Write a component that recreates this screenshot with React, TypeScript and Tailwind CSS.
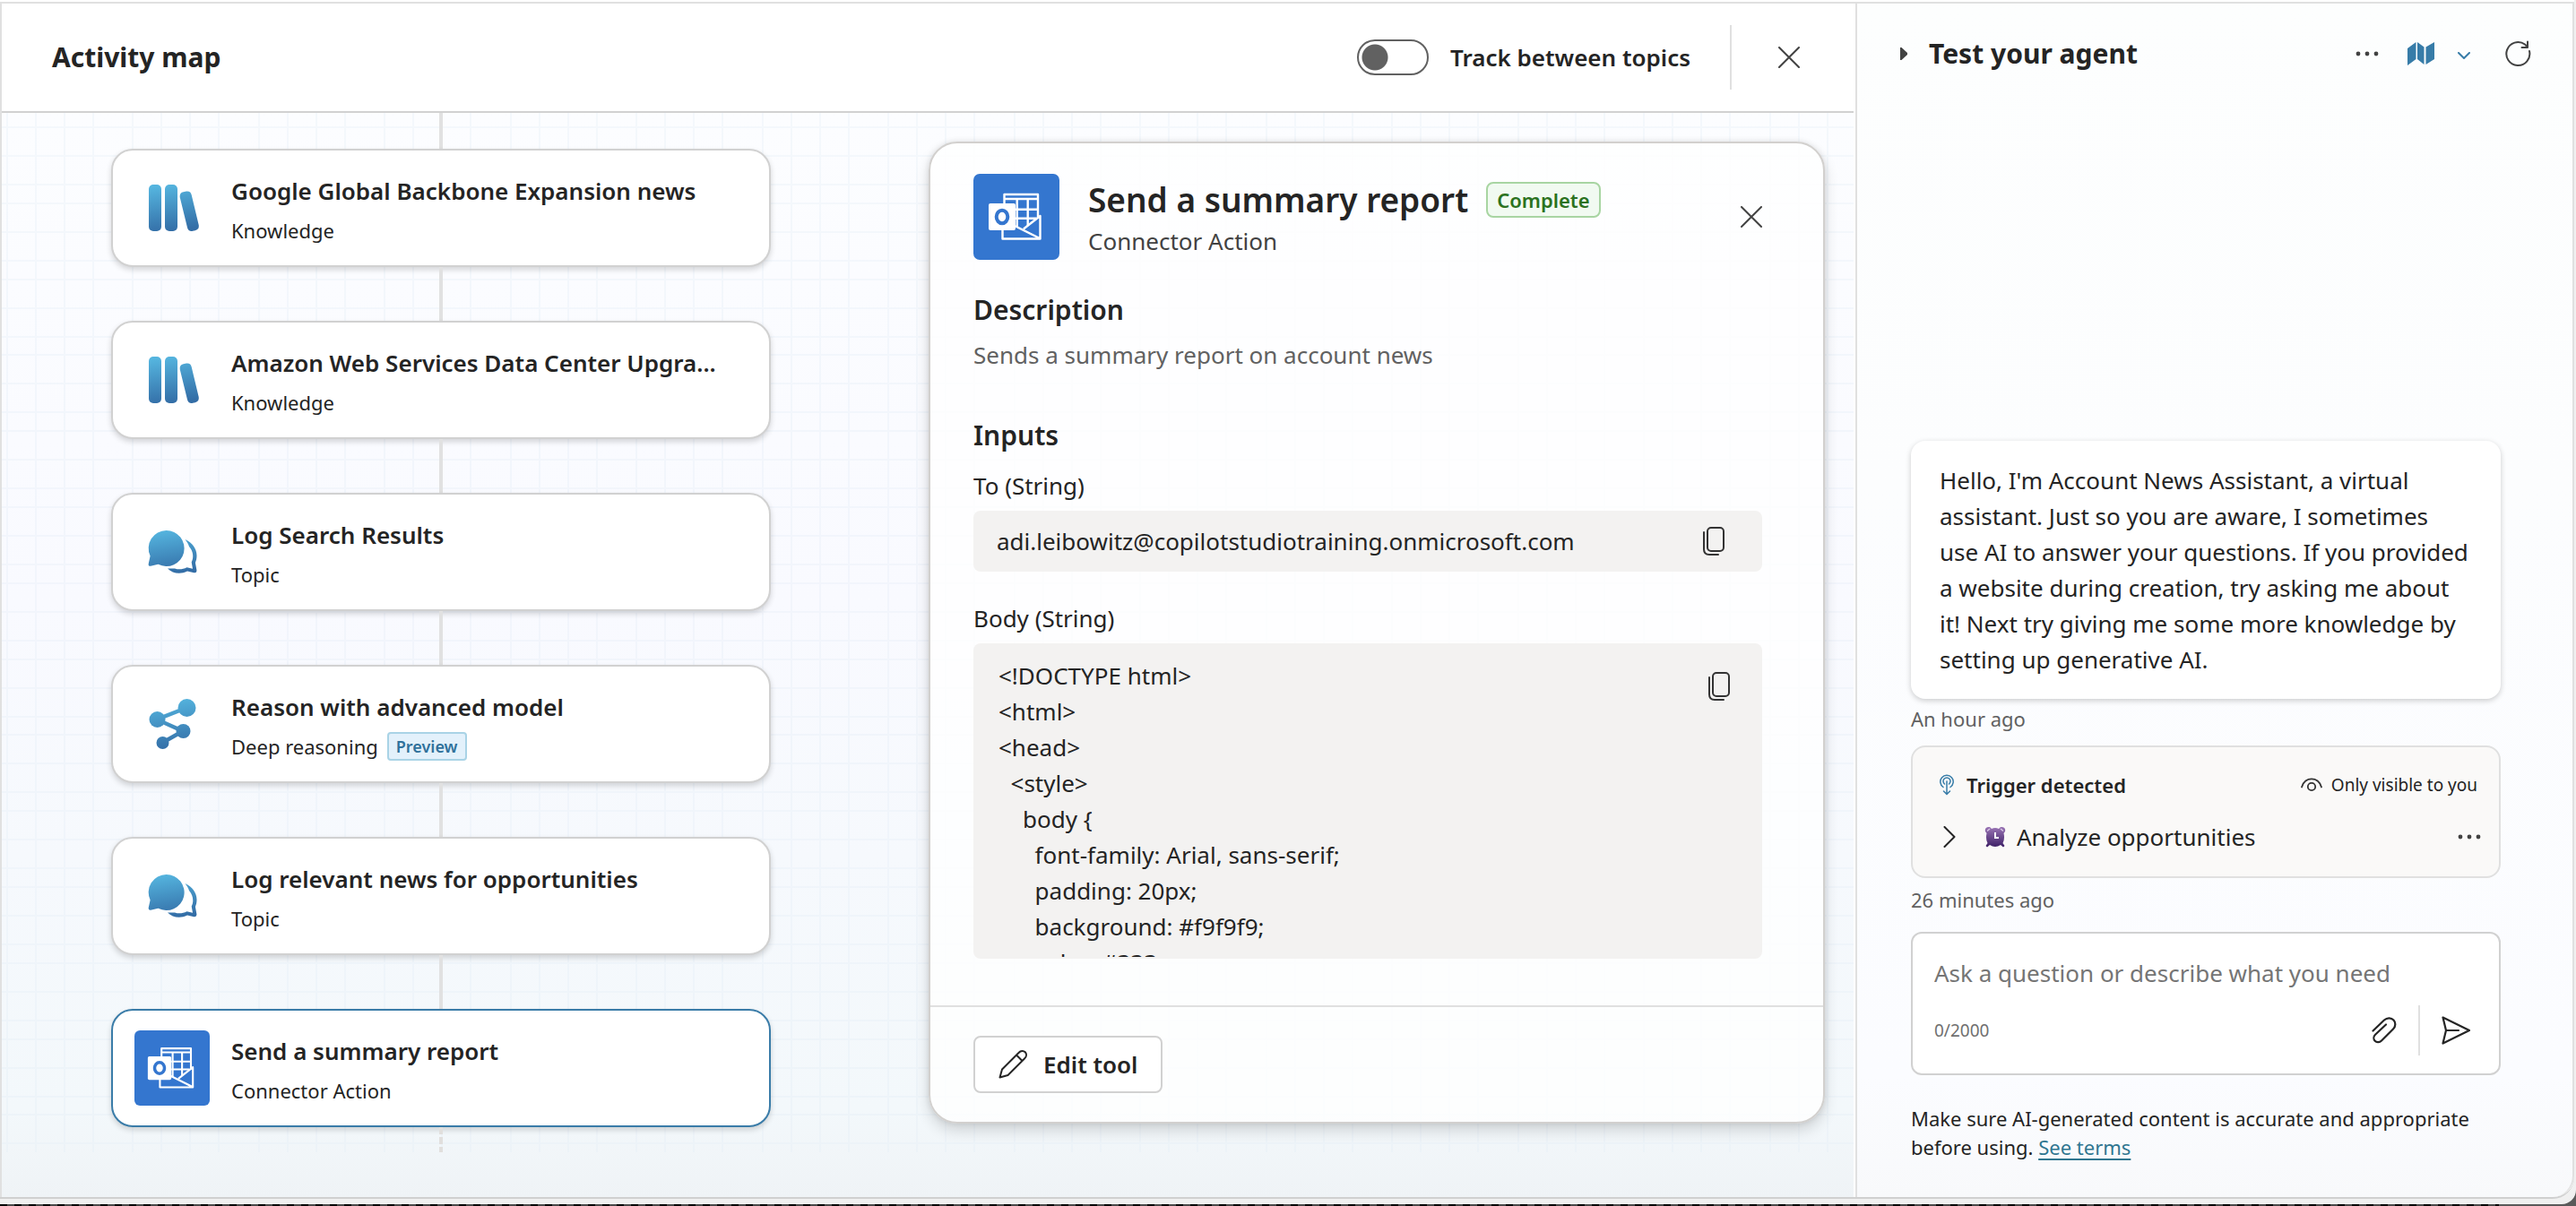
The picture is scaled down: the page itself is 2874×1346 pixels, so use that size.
import type { ReactNode } from "react";

const BLUE_TOP = "#55b5df";
const BLUE_BOTTOM = "#336da6";

function Fade({ id, y1, y2 }: { id: string; y1: number; y2: number }) {
  return (
    <defs>
      <linearGradient id={id} gradientUnits="userSpaceOnUse" x1="36" y1={y1} x2="44" y2={y2}>
        <stop offset="0" stopColor={BLUE_TOP} />
        <stop offset="1" stopColor={BLUE_BOTTOM} />
      </linearGradient>
    </defs>
  );
}

function BooksIcon() {
  return (
    <svg viewBox="0 0 84 84" className="size-21 shrink-0" aria-hidden="true">
      <Fade id="books" y1={16} y2={68} />
      <g fill="url(#books)">
        <rect x="16" y="16" width="14" height="52" rx="5" />
        <rect x="34" y="16" width="14" height="52" rx="5" />
        <path d="M54.6 24.2 L58 23.6 Q62.8 23 63.8 28 L71.7 61 Q72.6 66 67.8 67.2 L65.2 67.8 Q60.2 68.8 59 64 L50.8 30.4 Q50 25.2 54.6 24.2 Z" />
      </g>
    </svg>
  );
}

function ChatIcon() {
  return (
    <svg viewBox="0 0 84 84" className="size-21 shrink-0" aria-hidden="true">
      <Fade id="chat" y1={17} y2={66} />
      <path
        fill="url(#chat)"
        d="M35.500 18 A20 20 0 1 1 26.500 55.800 L18 57.800 Q15.300 58 15.700 55.200 L17.600 46.500 A20 20 0 0 1 35.500 18 Z"
      />
      <path
        fill="url(#chat)"
        d="M56.500 28 C64.500 31.500 69.500 38.500 69.500 46 C69.500 49 69 51.500 67.900 54 L69.400 62.300 Q69.700 65.600 66.500 65.200 L59 63.500 C51 67.500 42.500 66 37 60.500 C43 60.500 44 60.300 45 60.500 C49.500 62 54 61.500 58.500 59.300 L65 60.700 L63.700 53.500 C66.500 48 65.500 41 61 36 C60 33 58.500 30.500 56.500 28 Z"
      />
    </svg>
  );
}

function ReasonIcon() {
  return (
    <svg viewBox="0 0 84 84" className="size-21 shrink-0" aria-hidden="true">
      <Fade id="reason" y1={14} y2={70} />
      <path d="M58 24 L25 37 L54 50 L31 63" fill="none" stroke="url(#reason)" strokeWidth="4.500" />
      <g fill="url(#reason)">
        <circle cx="58.500" cy="24" r="10" />
        <circle cx="25.500" cy="37" r="9" />
        <circle cx="54.500" cy="50" r="8" />
        <circle cx="31.500" cy="63" r="7" />
      </g>
    </svg>
  );
}

function OutlookIcon({ className }: { className: string }) {
  return (
    <svg viewBox="0 0 96 96" className={className} aria-hidden="true">
      <rect width="96" height="96" rx="7" fill="#3476cf" />
      <g fill="none" stroke="#fff" strokeWidth="2.400" strokeLinejoin="round">
        <path d="M34.500 34 V23 H72 V50" />
        <path d="M34.500 28 H72 M48.700 28 V60 M60.700 28 V58 M47 39.700 H72 M47 49.700 H70" />
        <path d="M32.500 62 V72.500 H74.500 V47 L56 61.500 M46 58 L74 72" />
      </g>
      <rect x="17" y="33" width="30" height="30" rx="2" fill="#fff" />
      <ellipse cx="32" cy="48" rx="6.300" ry="7.200" fill="none" stroke="#3476cf" strokeWidth="4" />
    </svg>
  );
}

function CloseIcon() {
  return (
    <svg viewBox="0 0 24 24" className="size-6" fill="none" stroke="#424242" strokeWidth="2" strokeLinecap="round" aria-hidden="true">
      <path d="M1 1 L23 23 M23 1 L1 23" />
    </svg>
  );
}

function CopyIcon() {
  return (
    <svg viewBox="0 0 24 32" className="h-8 w-6" fill="none" stroke="#333" strokeWidth="2" strokeLinecap="round" aria-hidden="true">
      <rect x="5" y="1" width="18" height="26" rx="4" />
      <path d="M1 6 V25 Q1 31 7 31 H17" />
    </svg>
  );
}

function Dots() {
  return (
    <svg viewBox="0 0 26 6" className="h-1.5 w-6.5" fill="#424242" aria-hidden="true">
      <circle cx="3" cy="3" r="2.400" />
      <circle cx="13" cy="3" r="2.400" />
      <circle cx="23" cy="3" r="2.400" />
    </svg>
  );
}

function GridPattern() {
  return (
    <svg className="absolute inset-0 h-full w-full" aria-hidden="true">
      <defs>
        <pattern id="grid" x="5" y="15" width="281" height="424" patternUnits="userSpaceOnUse">
          <path
            d="M1 0V424M33 0V424M65 0V424M97 0V424M141 0V424M173 0V424M205 0V424M237 0V424M0 1H281M0 33H281M0 65H281M0 86H281M0 118H281M0 150H281M0 171H281M0 203H281M0 235H281M0 255H281M0 287H281M0 319H281M0 340H281M0 372H281M0 404H281"
            stroke="#dfe9f2"
            strokeOpacity="0.28"
            strokeWidth="2"
            fill="none"
          />
        </pattern>
      </defs>
      <rect width="100%" height="100%" fill="url(#grid)" />
    </svg>
  );
}

type Step = { title: string; kind: string; icon: ReactNode; preview?: boolean; selected?: boolean };

const steps: Step[] = [
  { title: "Google Global Backbone Expansion news", kind: "Knowledge", icon: <BooksIcon /> },
  { title: "Amazon Web Services Data Center Upgra...", kind: "Knowledge", icon: <BooksIcon /> },
  { title: "Log Search Results", kind: "Topic", icon: <ChatIcon /> },
  { title: "Reason with advanced model", kind: "Deep reasoning", icon: <ReasonIcon />, preview: true },
  { title: "Log relevant news for opportunities", kind: "Topic", icon: <ChatIcon /> },
  { title: "Send a summary report", kind: "Connector Action", icon: <OutlookIcon className="size-21 shrink-0" />, selected: true },
];

function StepCard({ step }: { step: Step }) {
  return (
    <button
      type="button"
      className={
        step.selected
          ? "flex h-33 w-full items-center gap-6 rounded-3xl border-2 border-[#3a7ca8] bg-white px-6 text-left shadow-[0_3px_6px_rgba(0,0,0,0.16)]"
          : "flex h-33 w-full items-center gap-6 rounded-3xl border-2 border-[#d1d1d1] bg-white px-6 text-left shadow-[0_3px_6px_rgba(0,0,0,0.16)]"
      }
    >
      {step.icon}
      <span className="flex min-w-0 flex-col gap-1.5">
        <span className="truncate text-[26px] leading-11 font-semibold">{step.title}</span>
        <span className="flex items-center gap-2.5 text-[22px] leading-8">
          {step.kind}
          {step.preview && (
            <span className="rounded-sm border-2 border-[#a9d3e6] bg-[#e3f1fb] px-2 text-lg leading-7 font-semibold text-[#30719b]">
              Preview
            </span>
          )}
        </span>
      </span>
    </button>
  );
}

const bodyText = `<!DOCTYPE html>
<html>
<head>
  <style>
    body {
      font-family: Arial, sans-serif;
      padding: 20px;
      background: #f9f9f9;
      color: #333;`;

function DetailPanel() {
  return (
    <article className="relative mt-8 mr-8 ml-44 min-w-0 flex-1 self-start rounded-[32px] border-2 border-[#d2d0ce] bg-white/80 shadow-[0_8px_16px_rgba(0,0,0,0.14),0_0_6px_rgba(0,0,0,0.1)]">
      <div className="pt-8.5 pr-17 pb-13 pl-12">
        <header className="flex items-center gap-8">
          <OutlookIcon className="size-24 shrink-0" />
          <div className="flex flex-1 flex-col gap-1.5">
            <div className="flex items-center gap-5">
              <h2 className="text-[37px] leading-12 font-semibold">Send a summary report</h2>
              <span className="rounded-lg border-2 border-[#a8d5a2] bg-[#f1faf1] px-2.5 text-[22px] leading-9 font-semibold text-[#2b7220]">
                Complete
              </span>
            </div>
            <p className="text-[26px] leading-8 text-[#424242]">Connector Action</p>
          </div>
          <button type="button" aria-label="Close details">
            <CloseIcon />
          </button>
        </header>
        <h3 className="mt-9 text-[30px] leading-10 font-semibold">Description</h3>
        <p className="mt-2.5 text-[26px] leading-10 text-[#616161]">Sends a summary report on account news</p>
        <h3 className="mt-12.5 text-[30px] leading-10 font-semibold">Inputs</h3>
        <p className="mt-4 text-[26px] leading-10">To (String)</p>
        <div className="mt-2 flex h-17 items-center justify-between rounded-lg bg-[#f3f2f1] pr-10.5 pl-6.5 text-[26px]">
          <span>adi.leibowitz@copilotstudiotraining.onmicrosoft.com</span>
          <button type="button" aria-label="Copy To value">
            <CopyIcon />
          </button>
        </div>
        <p className="mt-8 text-[26px] leading-10">Body (String)</p>
        <div className="mt-2 flex h-88 items-start justify-between rounded-lg bg-[#f3f2f1] pt-4 pr-9 pb-0.5 pl-7">
          <pre className="h-full overflow-hidden font-[inherit] text-[26px] leading-10">{bodyText}</pre>
          <button type="button" aria-label="Copy Body value" className="mt-4">
            <CopyIcon />
          </button>
        </div>
      </div>
      <footer className="border-t-2 border-[#e0e0e0] px-12 py-8">
        <button type="button" className="flex h-16 items-center gap-4.5 rounded-lg border-2 border-[#d1d1d1] bg-white px-6.5 text-[26px] font-semibold">
          <svg viewBox="0 0 32 32" className="size-8" fill="none" stroke="#242424" strokeWidth="2" strokeLinejoin="round" aria-hidden="true">
            <path d="M22.500 3 C25 .2 28.200 .8 29.800 2.300 C31.400 4 31.600 7 29 9.500 L10.500 28 L1.500 30.500 L4 21.500 Z M20 5.500 L26.500 12" />
          </svg>
          Edit tool
        </button>
      </footer>
    </article>
  );
}

function ActivityMap() {
  return (
    <section className="flex min-w-0 flex-1 flex-col border-l-2 border-[#e0e0e0] pr-0.5">
      <header className="box-content flex h-30 items-center border-b-2 border-[#d1d1d1] bg-white">
        <h1 className="flex-1 pl-14 text-3xl leading-10 font-bold">Activity map</h1>
        <label className="flex items-center gap-6 text-[26px] font-semibold">
          <input
            type="checkbox"
            role="switch"
            className="h-10 w-20 appearance-none rounded-full border-2 border-[#616161] bg-[radial-gradient(circle_at_18px_18px,#616161_14px,transparent_15px)]"
          />
          Track between topics
        </label>
        <span className="mr-13 ml-11 h-18 w-0.5 bg-[#e0e0e0]" />
        <button type="button" aria-label="Close activity map" className="mr-15">
          <CloseIcon />
        </button>
      </header>
      <div className="flex-1 bg-[linear-gradient(to_bottom,#fcfdff_0%,#f9faff_45%,#f3f8fb_92%,#eff3f6_100%)]">
        <div className="relative flex pl-30.5">
          <GridPattern />
          <ol className="relative flex w-[736px] shrink-0 flex-col items-center">
            {steps.map((step, i) => (
              <li key={step.title} className="flex w-full flex-col items-center">
                <span className={i === 0 ? "h-10 w-1 bg-[#e1e1e1]" : "h-15 w-1 bg-[#e1e1e1]"} />
                <StepCard step={step} />
              </li>
            ))}
            <li aria-hidden="true" className="h-7 w-1 bg-[repeating-linear-gradient(to_bottom,#e1dfdd_0_8px,transparent_8px_11px)]" />
          </ol>
          <DetailPanel />
        </div>
      </div>
    </section>
  );
}

function TestPanel() {
  return (
    <aside className="flex w-[802px] shrink-0 flex-col rounded-br-3xl border-r-2 border-l-2 border-[#e0e0e0] bg-[linear-gradient(to_bottom,#fdfefe,#fcfdfe_40%,#fbfcff_90%,#f8f9fb)]">
      <header className="flex h-28 items-center pr-11.5 pl-12">
        <svg viewBox="0 0 8 14" className="h-3.5 w-2 shrink-0 fill-[#424242]" aria-hidden="true">
          <path d="M0 0 H1.500 L8 6 V8 L1.500 14 H0 Z" />
        </svg>
        <h2 className="ml-6 flex-1 text-3xl leading-10 font-bold">Test your agent</h2>
        <button type="button" aria-label="More options">
          <Dots />
        </button>
        <button type="button" aria-label="Activity map" className="ml-8">
          <svg viewBox="0 0 32 28" className="h-7 w-8 fill-[#377ca8]" aria-hidden="true">
            <path d="M0 8 L9.500 1 V20 L0 27 Z M11 1 L18.500 6.500 V26 L11 20 Z M20.500 6.500 L30 1 V20 L20.500 26 Z" />
          </svg>
        </button>
        <button type="button" aria-label="Map options" className="ml-6">
          <svg viewBox="0 0 14 8" className="mt-1 h-2 w-3.5" fill="none" stroke="#377ca8" strokeWidth="2" strokeLinecap="round" aria-hidden="true">
            <path d="M1 1 L7 7 L13 1" />
          </svg>
        </button>
        <button type="button" aria-label="Refresh" className="ml-9.5">
          <svg viewBox="0 0 30 30" className="size-7.5" fill="none" stroke="#424242" strokeWidth="2" strokeLinecap="round" strokeLinejoin="round" aria-hidden="true">
            <path d="M28 12 A13 13 0 1 1 23 4.500 L26 7.500 M26 1.500 V8 H19.500" />
          </svg>
        </button>
      </header>
      <div className="flex-1" />
      <div className="flex flex-col pr-20 pb-10 pl-15">
        <p className="rounded-2xl bg-white py-6 pr-8.5 pl-8 text-[26px] leading-10 shadow-[0_2px_6px_rgba(0,0,0,0.2)]">
          Hello, I'm Account News Assistant, a virtual assistant. Just so you are aware, I sometimes
          <br />
          use AI to answer your questions. If you provided a website during creation, try asking me about it! Next try
          giving me some more knowledge by setting up generative AI.
        </p>
        <p className="mt-1.5 text-[22px] leading-8 text-[#616161]">An hour ago</p>
        <div className="mt-3.5 flex flex-col gap-4.5 rounded-2xl border-2 border-[#e0e0e0] bg-[#faf9f8] pt-5.5 pr-5 pb-6 pl-7.5">
          <div className="flex items-center">
            <svg viewBox="0 0 16 24" className="h-6 w-4" fill="none" stroke="#377ca8" strokeWidth="1.500" strokeLinecap="round" aria-hidden="true">
              <path d="M4 14.500 A7.200 7.200 0 1 1 12 14.500 M5.500 11 A4 4 0 1 1 10.500 11 M8 8 V22 M4.500 19 L8 22.500 L11.500 19" />
            </svg>
            <h3 className="ml-3.5 flex-1 text-[22px] leading-10 font-semibold">Trigger detected</h3>
            <svg viewBox="0 0 24 16" className="mr-2.5 h-4 w-6" fill="none" stroke="#333" strokeWidth="1.800" strokeLinecap="round" aria-hidden="true">
              <path d="M1 10.500 C4.500 -1.800 19.500 -1.800 23 10.500" />
              <circle cx="12" cy="10" r="4.200" />
            </svg>
            <span className="mr-1 text-[19px] leading-10">Only visible to you</span>
          </div>
          <div className="flex items-center">
            <button type="button" aria-label="Expand" className="mx-1">
              <svg viewBox="0 0 14 24" className="h-6 w-3.5" fill="none" stroke="#242424" strokeWidth="2" strokeLinecap="round" strokeLinejoin="round" aria-hidden="true">
                <path d="M1.500 1 L12.500 12 L1.500 23" />
              </svg>
            </button>
            <svg viewBox="0 0 24 24" className="ml-7 size-6" aria-hidden="true">
              <defs>
                <linearGradient id="clock" x1="0" y1="0" x2="0" y2="1">
                  <stop offset="0" stopColor="#9a75b5" />
                  <stop offset="1" stopColor="#3d1f66" />
                </linearGradient>
              </defs>
              <path d="M4 1 H6 L8 3 Q12 1 16 3 L18 1 H20 Q24 2 23 6 L21.500 8 Q23 14 20.500 19 L22.500 22 L21 23.500 L18 21 Q12 25 6 21 L3 23.500 L1.500 22 L3.500 19 Q1 14 2.500 8 L1 6 Q0 2 4 1 Z" fill="url(#clock)" />
              <path d="M12 7 V13 H16" fill="none" stroke="#fff" strokeWidth="2" />
              <path d="M3 5.500 L6 3 M21 5.500 L18 3" stroke="#d9c8e6" strokeWidth="1.500" />
            </svg>
            <span className="ml-3 flex-1 text-[26px] leading-10">Analyze opportunities</span>
            <button type="button" aria-label="Trigger options">
              <Dots />
            </button>
          </div>
        </div>
        <p className="mt-2 text-[22px] leading-8 text-[#616161]">26 minutes ago</p>
        <form className="mt-5 flex flex-col rounded-xl border-2 border-[#d1d1d1] bg-white pt-6 pr-8 pb-5 pl-6">
          <textarea
            aria-label="Message"
            rows={1}
            placeholder="Ask a question or describe what you need"
            className="block resize-none overflow-hidden text-[26px] leading-10 outline-none placeholder:text-[#757575]"
          />
          <div className="mt-4 flex h-14 items-center">
            <span className="flex-1 text-[19px] text-[#707070]">0/2000</span>
            <button type="button" aria-label="Attach file">
              <svg viewBox="0 0 28 30" className="h-7.5 w-7" fill="none" stroke="#242424" strokeWidth="2.200" strokeLinecap="round" strokeLinejoin="round" aria-hidden="true">
                <path d="M1.500 15.500 L14 3.500 C17.500 .3 22 .8 24.500 3.500 C27 6.200 27 10.500 24 13.500 L11 26.500 C9 28.600 5.500 28.800 3.700 26.800 C1.800 24.800 2 21.700 4 19.700 L16 8.500" />
              </svg>
            </button>
            <span className="mr-6 ml-6 h-14 w-0.5 bg-[#e0e0e0]" />
            <button type="submit" aria-label="Send">
              <svg viewBox="0 0 32 32" className="size-8" fill="none" stroke="#242424" strokeWidth="2.200" strokeLinecap="round" strokeLinejoin="round" aria-hidden="true">
                <path d="M1.500 1.500 L31 16 L1.500 30.500 L5 16 Z M5 16 H19" />
              </svg>
            </button>
          </div>
        </form>
        <p className="mt-8 text-[22px] leading-8">
          Make sure AI-generated content is accurate and appropriate before using.{" "}
          <a href="#terms" className="text-[#2f7690] underline decoration-2 underline-offset-4">
            See terms
          </a>
        </p>
      </div>
    </aside>
  );
}

export default function App() {
  return (
    <div className="flex min-h-screen flex-col bg-[#5a5a5a] font-['Noto_Sans','Open_Sans',sans-serif] text-[#242424]">
      <div className="flex flex-1 flex-col rounded-br-2xl bg-[#f0f0f0] pr-0.5 pb-1.5">
        <div className="h-0.5 bg-white" />
        <main className="flex flex-1 rounded-br-3xl border-t-2 border-b-2 border-t-[#e0e0e0] border-b-[#d0d0d0] bg-white">
          <ActivityMap />
          <TestPanel />
        </main>
      </div>
      <div className="h-0.5 w-[97%] bg-[repeating-linear-gradient(to_right,#000_0_8px,#4a4a4a_8px_16px)]" />
    </div>
  );
}
